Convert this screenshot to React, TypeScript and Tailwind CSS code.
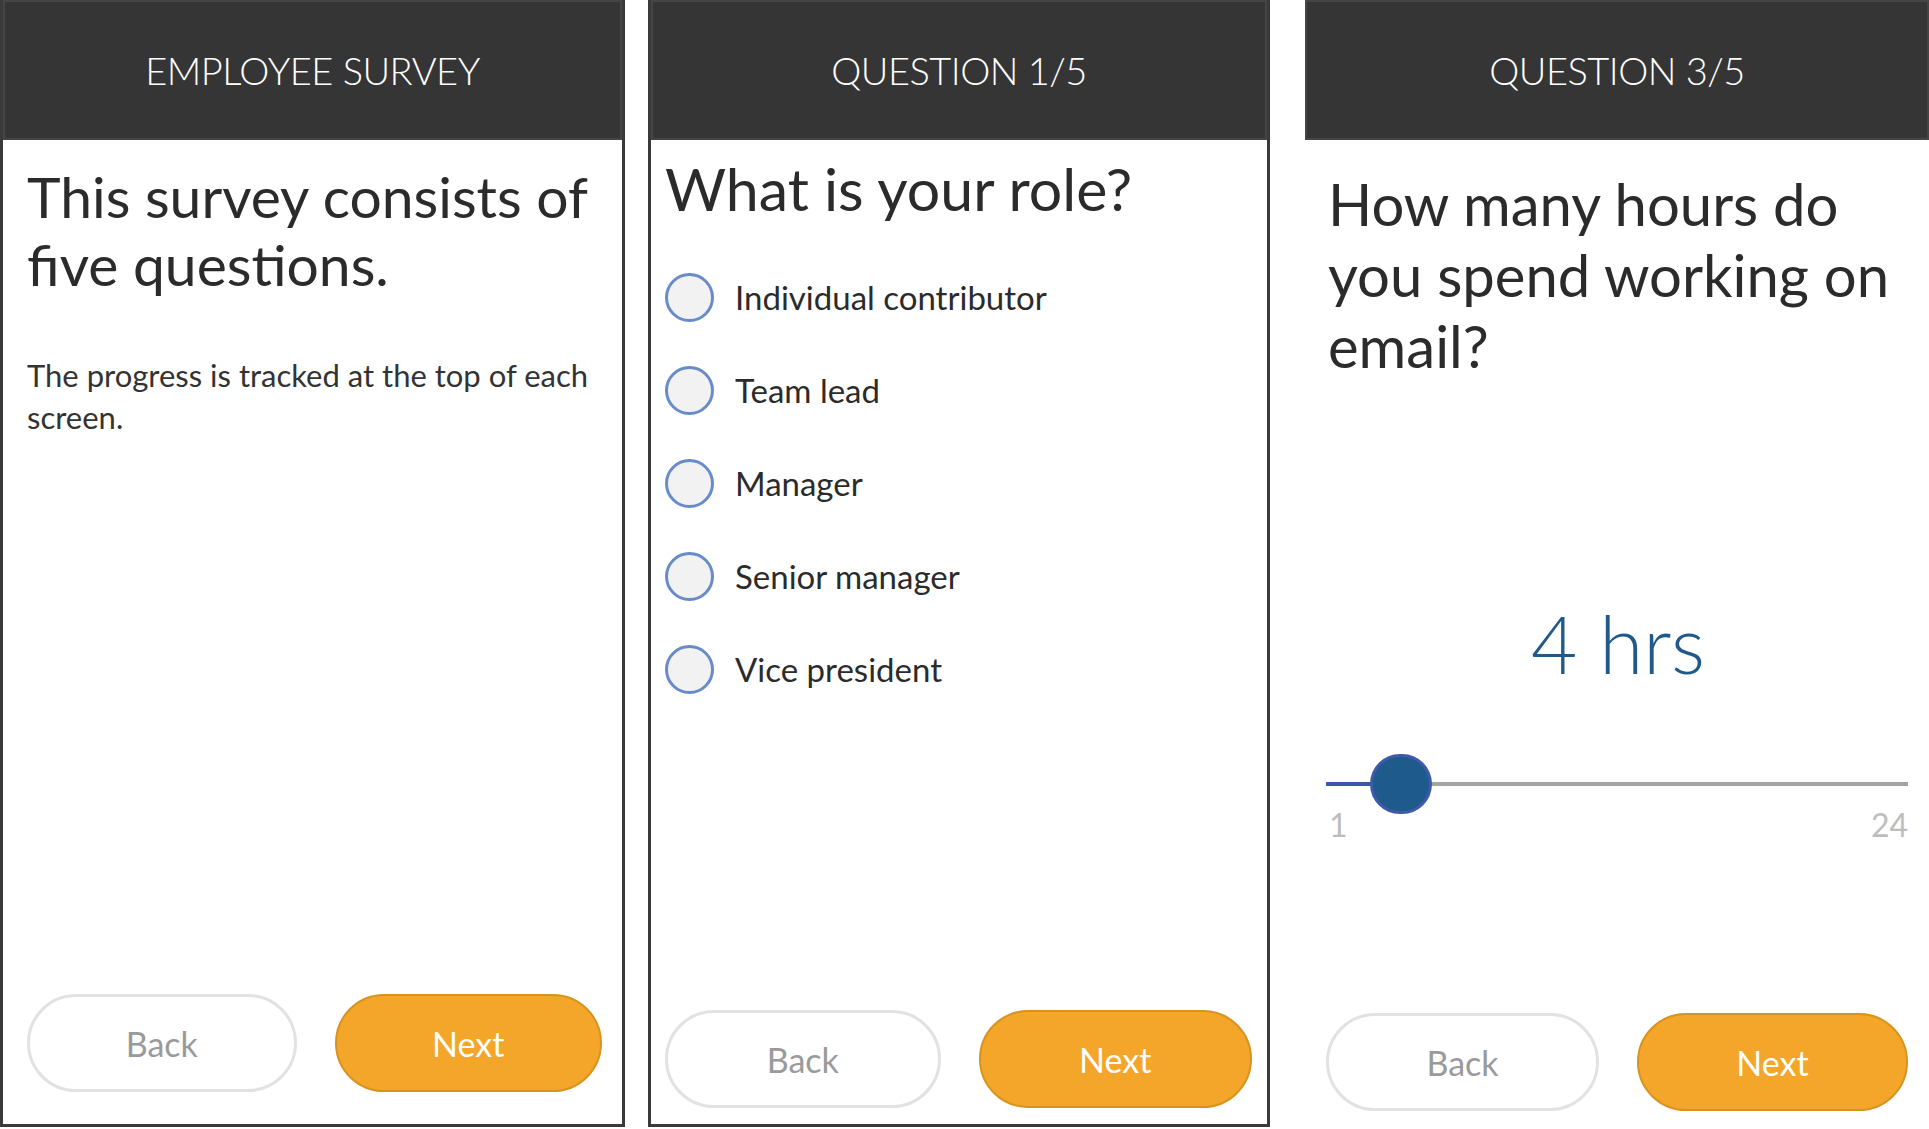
import React from "react";

const lato = { fontFamily: "Lato, 'Open Sans', sans-serif" };

const Header: React.FC<{ title: string }> = ({ title }) => (
    <div className="h-[140px] shrink-0 bg-[#353535] border-2 border-[#454545] flex items-center justify-center">
        <h1 className="text-white text-[38px] font-light tracking-[-0.5px]">{title}</h1>
    </div>
);

const Buttons: React.FC<{ className?: string }> = ({ className = "" }) => (
    <div className={"mt-auto flex justify-between gap-[38px] " + className}>
        <button className="flex-1 h-[98px] rounded-full border-[3px] border-[#e2e2e2] bg-white text-[#9a9a9a] text-[34px]">
            Back
        </button>
        <button className="flex-1 h-[98px] rounded-full border-2 border-[#d8921e] bg-[#f4a62a] text-white text-[34px]">
            Next
        </button>
    </div>
);

const roles = ["Individual contributor", "Team lead", "Manager", "Senior manager", "Vice president"];

const App: React.FC = () => {
    return (
        <div className="w-[1929px] h-[1129px] bg-white flex text-[#2b2b2b]" style={lato}>
            {/* intro */}
            <section className="w-[625px] h-[1127px] flex flex-col border-x-[3px] border-b-[3px] border-[#3a3a3a]">
                <Header title="EMPLOYEE SURVEY" />
                <div className="flex-1 flex flex-col pl-[24px] pr-[20px] pt-[22px] pb-[32px]">
                    <h2 className="text-[57px] leading-[68px]">This survey consists of five questions.</h2>
                    <p className="mt-[56px] text-[31px] leading-[42px] text-[#333]">
                        The progress is tracked at the top of each screen.
                    </p>
                    <Buttons />
                </div>
            </section>

            {/* question 1 */}
            <section className="ml-[23px] w-[622px] h-[1127px] flex flex-col border-x-[3px] border-b-[3px] border-[#3a3a3a]">
                <Header title="QUESTION 1/5" />
                <div className="flex-1 flex flex-col pl-[14px] pr-[15px] pt-[15px] pb-[16px]">
                    <h2 className="text-[59px] leading-[68px]">What is your role?</h2>
                    <ul className="mt-[50px] flex flex-col gap-[44px]">
                        {roles.map((r) => (
                            <li key={r} className="flex items-center gap-[21px] h-[49px]">
                                <span className="w-[49px] h-[49px] rounded-full bg-[#f2f2f2] border-[3px] border-[#6a8bc9]" />
                                <span className="text-[33px]">{r}</span>
                            </li>
                        ))}
                    </ul>
                    <Buttons />
                </div>
            </section>

            {/* question 3 */}
            <section className="ml-[35px] flex-1 h-[1127px] flex flex-col">
                <Header title="QUESTION 3/5" />
                <div className="flex-1 flex flex-col pl-[23px] pr-[21px] pt-[28px] pb-[16px]">
                    <h2 className="text-[58px] leading-[71px]">How many hours do you spend working on email?</h2>
                    <div className="mt-[202px] text-center text-[80px] font-light text-[#1f5a8b]">4 hrs</div>
                    <div className="mt-[50px] relative h-[62px] flex items-center -ml-[2px]">
                        <div className="w-full h-[4px] bg-[#a3a3a3]" />
                        <div className="absolute left-0 w-[74px] h-[4px] bg-[#3a57a8]" />
                        <div className="absolute left-[44px] w-[62px] h-[60px] rounded-full bg-[#1e5a8c] border-[3px] border-[#3e5aa8]" />
                    </div>
                    <div className="-mt-[14px] flex justify-between text-[32px] text-[#bdbdbd]">
                        <span className="ml-[1px]">1</span>
                        <span>24</span>
                    </div>
                    <Buttons className="-ml-[2px]" />
                </div>
            </section>
        </div>
    );
};

export default App;
